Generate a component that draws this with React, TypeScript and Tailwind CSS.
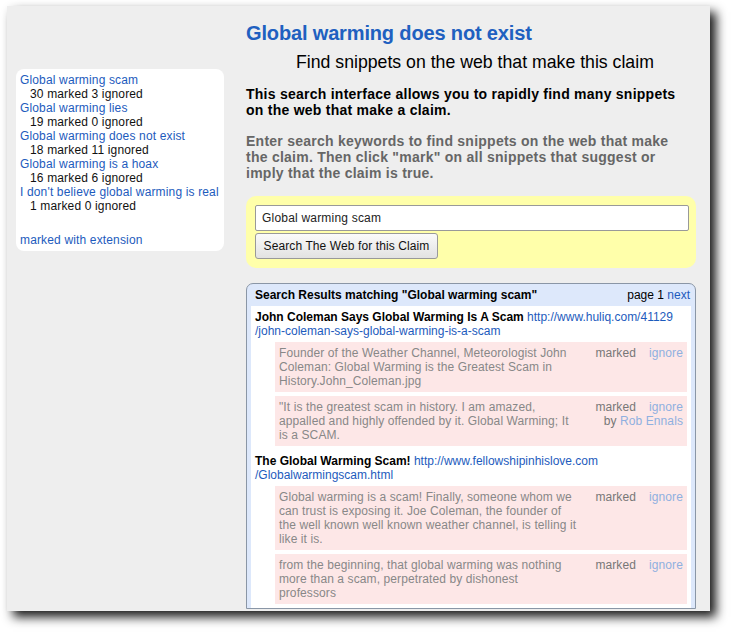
import React from 'react';

const claims = [
  { title: 'Global warming scam', marked: 30, ignored: 3 },
  { title: 'Global warming lies', marked: 19, ignored: 0 },
  { title: 'Global warming does not exist', marked: 18, ignored: 11 },
  { title: 'Global warming is a hoax', marked: 16, ignored: 6 },
  { title: "I don't believe global warming is real", marked: 1, ignored: 0 },
];

type Snippet = { lines: string[]; by?: string };
type Result = { title: string; urlA: string; urlB: string; snippets: Snippet[] };

// snippet text is kept in the line breaks the page shows
const results: Result[] = [
  {
    title: 'John Coleman Says Global Warming Is A Scam',
    urlA: 'http://www.huliq.com/41129',
    urlB: '/john-coleman-says-global-warming-is-a-scam',
    snippets: [
      {
        lines: [
          'Founder of the Weather Channel, Meteorologist John',
          'Coleman: Global Warming is the Greatest Scam in',
          'History.John_Coleman.jpg',
        ],
      },
      {
        lines: [
          '"It is the greatest scam in history. I am amazed,',
          'appalled and highly offended by it. Global Warming; It',
          'is a SCAM.',
        ],
        by: 'Rob Ennals',
      },
    ],
  },
  {
    title: 'The Global Warming Scam!',
    urlA: 'http://www.fellowshipinhislove.com',
    urlB: '/Globalwarmingscam.html',
    snippets: [
      {
        lines: [
          'Global warming is a scam! Finally, someone whom we',
          'can trust is exposing it. Joe Coleman, the founder of',
          'the well known well known weather channel, is telling it',
          'like it is.',
        ],
      },
      {
        lines: [
          'from the beginning, that global warming was nothing',
          'more than a scam, perpetrated by dishonest',
          'professors',
        ],
      },
    ],
  },
];

function Sidebar() {
  return (
    <div className="ml-[9px] mt-[63px] w-[208px] h-[182px] shrink-0 bg-white rounded-[8px] pl-[4px] pt-[4px] text-[12px] leading-[14px] tracking-[0.15px]">
      {claims.map(c => (
        <div key={c.title}>
          <a className="block text-[#1d5bbd] cursor-pointer">{c.title}</a>
          <div className="pl-[10px] text-[#111]">
            {c.marked} marked {c.ignored} ignored
          </div>
        </div>
      ))}
      <a className="block mt-[20px] text-[#1d5bbd] cursor-pointer">marked with extension</a>
    </div>
  );
}

function SnippetRow({ snippet }: { snippet: Snippet }) {
  return (
    <div className="ml-[20px] mt-[4px] flex bg-[#fde7e7] py-[4px] text-[12px] leading-[14px] tracking-[0.1px]">
      <div className="w-[306px] shrink-0 pl-[4px] text-[#888] whitespace-nowrap">
        {snippet.lines.map((l, i) => (
          <div key={i}>{l}</div>
        ))}
      </div>
      <div className="flex-1 pr-[4px] text-right">
        <div className="flex justify-end gap-[13px]">
          <span className="text-[#777]">marked</span>
          <a className="text-[#8fb0e0] cursor-pointer">ignore</a>
        </div>
        {snippet.by && (
          <div className="text-[#777]">
            by <a className="text-[#8fb0e0] cursor-pointer">{snippet.by}</a>
          </div>
        )}
      </div>
    </div>
  );
}

function ResultBlock({ result }: { result: Result }) {
  return (
    <div className="p-[4px]">
      <div className="text-[12px] leading-[14px]">
        <span className="font-bold text-black">{result.title}</span>{' '}
        <a className="text-[#1d5bbd] cursor-pointer">
          {result.urlA}
          <wbr />
          {result.urlB}
        </a>
      </div>
      {result.snippets.map((s, i) => (
        <SnippetRow key={i} snippet={s} />
      ))}
    </div>
  );
}

export default function App() {
  return (
    <div className="h-[634px] bg-white pl-[7px] pt-[6px] font-['Liberation_Sans',Arial,sans-serif]">
      <div className="w-[703px] h-[605px] bg-[#eeeeee] overflow-hidden flex items-start shadow-[6px_6px_10px_rgba(0,0,0,0.9)]">
        <Sidebar />

        <div className="ml-[22px] w-[450px] shrink-0 pt-[15px]">
          <h1 className="text-[20px] leading-[24px] font-bold tracking-[-0.15px] text-[#2060c0]">Global warming does not exist</h1>
          <h2 className="mt-[7px] pl-[50px] text-[17.7px] leading-[20px] text-black">
            Find snippets on the web that make this claim
          </h2>
          <p className="mt-[14px] pr-[8px] text-[14px] leading-[16px] font-bold tracking-[0.25px] text-black">
            This search interface allows you to rapidly find many snippets on the web that make a claim.
          </p>
          <p className="mt-[15px] pr-[8px] text-[14px] leading-[16px] font-bold tracking-[0.25px] text-[#666]">
            Enter search keywords to find snippets on the web that make the claim. Then click "mark" on all snippets that suggest or imply that the claim is true.
          </p>

          <div className="mt-[15px] h-[72px] rounded-[10px] bg-[#ffffaa] pl-[9px] pt-[9px]">
            <input
              className="block w-[434px] h-[26px] rounded-[2px] border border-[#999] bg-white px-[6px] text-[12px] tracking-[0.2px] text-[#222] outline-none"
              defaultValue="Global warming scam"
            />
            <button className="mt-[2px] block w-[183px] h-[26px] rounded-[3px] border border-[#999] bg-gradient-to-b from-[#fafafa] to-[#e2e2e2] text-[12px] tracking-[0.1px] text-[#111]">
              Search The Web for this Claim
            </button>
          </div>

          <div className="mt-[15px] rounded-t-[7px] border border-[#8a96a6] bg-[#dde8fb] px-[4px]">
            <div className="flex justify-between pl-[4px] pr-[1px] pt-[4px] pb-[4px] text-[12px] leading-[14px]">
              <span className="font-bold text-black">Search Results matching "Global warming scam"</span>
              <span className="text-black">
                page 1 <a className="text-[#1d5bbd] cursor-pointer">next</a>
              </span>
            </div>
            <div className="bg-white">
              {results.map((r, i) => (
                <ResultBlock key={i} result={r} />
              ))}
            </div>
          </div>
        </div>
      </div>
    </div>
  );
}
